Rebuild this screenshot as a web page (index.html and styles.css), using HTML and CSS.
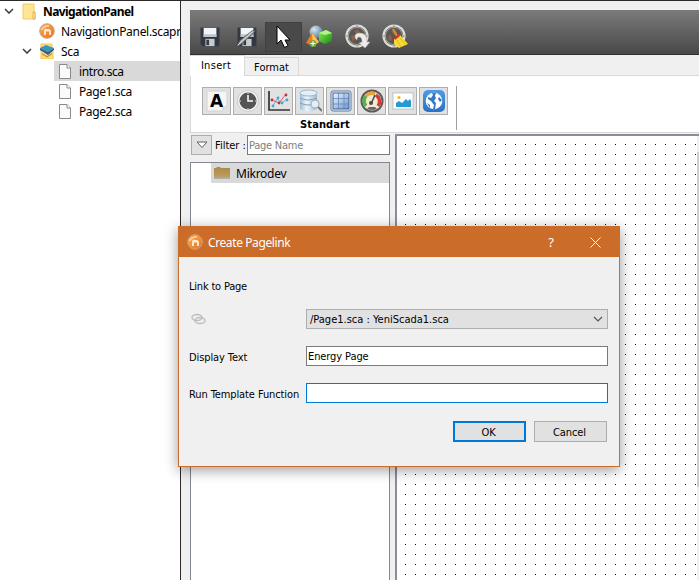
FILE: index.html
```
<!DOCTYPE html>
<html lang="en">
<head>
<meta charset="utf-8">
<title>NavigationPanel</title>
<link rel="stylesheet" href="styles.css">
</head>
<body>
<svg class="defs" width="0" height="0">
  <defs>
    <linearGradient id="orange" x1="0" y1="0" x2="1" y2="1"><stop offset="0" stop-color="#ffad4e"/><stop offset="1" stop-color="#ee7018"/></linearGradient>
    <linearGradient id="green" x1="0" y1="0" x2="1" y2="1"><stop offset="0" stop-color="#8af05a"/><stop offset="1" stop-color="#168a0c"/></linearGradient>
    <radialGradient id="ball" cx=".35" cy=".3" r=".8"><stop offset="0" stop-color="#d7e6f2"/><stop offset="1" stop-color="#4c7392"/></radialGradient>
    <linearGradient id="blue" x1="0" y1="0" x2="0" y2="1"><stop offset="0" stop-color="#4f9ae6"/><stop offset="1" stop-color="#2b70c4"/></linearGradient>
    <linearGradient id="grid" x1="0" y1="0" x2="1" y2="1"><stop offset="0" stop-color="#f1f6fc"/><stop offset="1" stop-color="#6d96cc"/></linearGradient>
    <linearGradient id="steel" x1="0" y1="0" x2="1" y2="0"><stop offset="0" stop-color="#9dbdd6"/><stop offset=".4" stop-color="#edf5fb"/><stop offset="1" stop-color="#9ab8cf"/></linearGradient>
    <linearGradient id="gold" x1="0" y1="0" x2="0" y2="1"><stop offset="0" stop-color="#a88a4c"/><stop offset=".75" stop-color="#bd9b58"/><stop offset="1" stop-color="#aab4bd"/></linearGradient>
    <symbol id="logo" viewBox="0 0 16 16"><circle cx="8" cy="8" r="7.3" fill="url(#orange)" stroke="#c2a58c"/><path d="M5 12V7l2-2v1h3l2 1.500V12h-2V8.500H7V12z" fill="#fff" opacity=".8"/><path d="M2.500 7Q4.500 2.800 10 2.800" fill="none" stroke="#ffd7a0" stroke-width="1.500"/></symbol>
    <symbol id="page" viewBox="0 0 14 17"><path d="M1.500 1.500h7.500l3.500 3.500v10.500h-11z" fill="#fafafa" stroke="#898989"/><path d="M9 1.500V5h3.500" fill="#fff" stroke="#898989"/></symbol>
    <symbol id="floppy" viewBox="0 0 22 22"><path d="M1 1h20v20H3l-2-2z" fill="#303742" stroke="#3a414b"/><path d="M4 1h14v10H4z" fill="#f2f5f8"/><path d="M4 8h14v3H4z" fill="#b9c5d1"/><path d="M6 13h10v8H6z" fill="#c8cbce"/><path d="M7 14h3v6H7z" fill="#343942"/></symbol>
    <symbol id="reel" viewBox="0 0 26 26"><circle cx="12" cy="12" r="10.500" fill="#5a5654" stroke="#deded9" stroke-width="2.200"/><circle cx="12" cy="12" r="8.600" fill="none" stroke="#a2a29c"/><path d="M9 7l4-2 2 4-3 2zM6 12l3-1 1 5-3 1z" fill="#8d5f48"/><path d="M12 .5v3M.5 12h3M12 20v3M20.500 12h3" stroke="#9b9b96"/></symbol>
  </defs>
</svg>
<div class="app">
  <aside class="explorer">
    <div class="node root"><svg class="chev" viewBox="0 0 10 6"><path d="M1 1l4 4 4-4"/></svg>
      <svg class="folder" viewBox="0 0 14 17"><path d="M1 1h11v8h1v7H1z" fill="#ffe594" stroke="#f0cc6b"/><path d="M11 9h2v7h-2z" fill="#fff0b8" stroke="#d9b34d"/></svg><span>NavigationPanel</span></div>
    <div class="node file1"><svg class="i16"><use href="#logo"/></svg><span>NavigationPanel.scapr</span></div>
    <div class="node sub"><svg class="chev" viewBox="0 0 10 6"><path d="M1 1l4 4 4-4"/></svg>
      <svg class="i16" viewBox="0 0 16 16"><path d="M2 1h11v7h1v8H2z" fill="#ffdf7a" stroke="#ecc75c"/><path d="M3 10l5 3 5-3v1.500L8 14.500l-5-3z" fill="#e28332"/><path d="M1 5l6-3 8 3-6 4z" fill="#3c93bd"/><path d="M1 5v2l8 5V9zM15 5v2l-6 5V9z" fill="#226488"/></svg><span>Sca</span></div>
    <div class="node leaf selected"><svg class="doc"><use href="#page"/></svg><span>intro.sca</span></div>
    <div class="node leaf"><svg class="doc"><use href="#page"/></svg><span>Page1.sca</span></div>
    <div class="node leaf"><svg class="doc"><use href="#page"/></svg><span>Page2.sca</span></div>
  </aside>
  <main class="editor">
    <div class="toolbar">
      <div class="tool"><svg class="i20"><use href="#floppy"/></svg></div>
      <div class="tool"><svg class="i20" viewBox="0 0 22 22"><use href="#floppy" width="22" height="22"/><path d="M0 21l3-6L17 4l3 0-2 3L4 19z" fill="#a6a8a9" stroke="#55595d"/><path d="M1 20L17 5" stroke="#e6e8e8"/></svg></div>
      <div class="tool active"><svg class="cursor" viewBox="0 0 15 24"><path d="M1 1v18l4-4 3.500 7.500 3.500-1.800-3-5.700h5z" fill="#fff" stroke="#000"/></svg></div>
      <div class="tool"><svg class="shapes" viewBox="0 0 26 24"><circle cx="10" cy="7" r="6.500" fill="url(#ball)"/><path d="M6 8L0 18l7 3 6-4z" fill="#ef7a20"/><path d="M6 8l1 13 6-4z" fill="#ffc54d"/><circle cx="7" cy="18.500" r="3.500" fill="#76a94a"/><path d="M7 16v5M4.500 18.500h5" stroke="#fff" fill="none"/><path d="M13 8l7-3 6 3v8l-7 3-6-3z" fill="url(#green)"/><path d="M13 8l6 2 7-2-6-3z" fill="#b1f587"/></svg></div>
      <div class="tool"><svg class="i26" viewBox="0 0 26 26"><use href="#reel" width="26" height="26"/><path d="M10 14q-1-5 5-5 7 0 7 9h3l-5 6-6-5 3-1q0-5-3-5-2 0-2 3z" fill="#ecebea" stroke="#aaa" stroke-width=".5"/></svg></div>
      <div class="tool"><svg class="i26" viewBox="0 0 26 26"><use href="#reel" width="26" height="26"/><path d="M11 5l4 7" stroke="#d28b35" stroke-width="2.400"/><path d="M12 15l6-4 8 9-9 4-5-4z" fill="#f6dc32"/><path d="M12 14l5-4 1 2-5 4z" fill="#d52d27"/><path d="M15 16l4 7M18 14l5 6" stroke="#cfaa1c" stroke-width=".7"/></svg></div>
    </div>
    <div class="tabs"><div class="tab on">Insert</div><div class="tab">Format</div></div>
    <section class="ribbon">
      <div class="group">
        <div class="buttons">
          <button><svg viewBox="0 0 24 24"><path d="M2 2h20v15l-5 5H2z" fill="#f6f6f6" stroke="#d2d2d2"/><path d="M17 22v-4l5-1z" fill="#ddd"/></svg><b>A</b></button>
          <button><svg viewBox="0 0 24 24"><circle cx="12" cy="12" r="10.500" fill="#f3f3f3" stroke="#ccc"/><circle cx="12" cy="12" r="8.500" fill="#555"/><path d="M12 6v6h5" fill="none" stroke="#fff" stroke-width="1.500"/><path d="M12 4v1M12 19v1M4 12h1M19 12h1" stroke="#ddd"/></svg></button>
          <button><svg viewBox="0 0 24 24"><path d="M2 2v19h21" fill="none" stroke="#333" stroke-width="1.700"/><path d="M6 17l4-7 5 4 5-4" fill="none" stroke="#54a9d0" stroke-width=".8"/><path d="M5 11l7 3 7-9" fill="none" stroke="#ca4449" stroke-width=".8"/><g fill="#c7303a"><circle cx="5" cy="11" r="1.400"/><circle cx="12" cy="14" r="1.400"/><circle cx="19" cy="6" r="1.400"/></g><g fill="#48a4cf"><circle cx="6" cy="17" r="1.400"/><circle cx="11" cy="9" r="1.400"/><circle cx="15" cy="14" r="1.400"/><circle cx="20" cy="11" r="1.400"/></g></svg></button>
          <button><svg viewBox="0 0 24 24"><path d="M2 4v16q8 5 17 0V4z" fill="url(#steel)"/><ellipse cx="10.500" cy="4" rx="8.500" ry="3" fill="#e4eff8" stroke="#9ab7cd"/><path d="M2 9q8 4 17 0M2 14q8 4 17 0" stroke="#7f9fb9" fill="none"/><circle cx="17" cy="15" r="4" fill="#e3eef5" stroke="#aab4ba" stroke-width="1.300"/><path d="M20 18l4 4" stroke="#777" stroke-width="2"/></svg></button>
          <button><svg viewBox="0 0 24 24"><rect x="2" y="2" width="20" height="20" rx="2" fill="#f3f7fc" stroke="#5a79a0"/><rect x="4" y="4" width="16" height="16" fill="url(#grid)"/><path d="M4 9.500h16M4 15h16M9.500 4v16M15 4v16" stroke="#6588ba" stroke-width=".8"/><rect x="4" y="4" width="16" height="16" fill="none" stroke="#3b5f98"/></svg></button>
          <button><svg viewBox="0 0 24 24"><circle cx="12" cy="12" r="10.500" fill="#f2e9d0" stroke="#5b5b5b" stroke-width="2"/><path d="M6 17A7.500 7.500 0 0 1 6 7" fill="none" stroke="#58b44a" stroke-width="3.500"/><path d="M6 7a7.500 7.500 0 0 1 9-2" fill="none" stroke="#eda437" stroke-width="3.500"/><path d="M16 6a7.500 7.500 0 0 1 2 11" fill="none" stroke="#d83a36" stroke-width="3.500"/><path d="M11 15l4-9" stroke="#444" stroke-width="1.500"/><circle cx="11" cy="14" r="2" fill="#494949"/><path d="M7 20q5 2 10 0l-2-2H9z" fill="#666"/></svg></button>
          <button><svg viewBox="0 0 24 24"><path d="M1 3h22v18H1z" fill="#cecece"/><path d="M2.500 4.500h19v15h-19z" fill="#fff"/><path d="M5 18v-4l3-2 3 2 4-4 2 2 2-2 1 2v6z" fill="#239bd0"/><circle cx="8" cy="8.500" r="1.600" fill="#f3b61d"/></svg></button>
          <button><svg viewBox="0 0 24 24"><rect x="1" y="1" width="22" height="22" rx="5" fill="url(#blue)"/><circle cx="12" cy="12" r="8.300" fill="#fff"/><path d="M10 4l4 0-1 3 1 2-2 3 2 2-1 6-2 0 1-4-3-4-3-2 0-2 3 1 2-3zM17 8l3 3-2 2-2-3zM5 14l3 2 0 3z" fill="#3178ca"/></svg></button>
        </div>
        <div class="caption">Standart</div>
      </div>
    </section>
    <div class="work">
      <div class="library">
        <div class="filter"><button class="drop"><svg viewBox="0 0 12 8"><path d="M1 1h10L6 6.500z" fill="#fff" stroke="#606060"/></svg></button><label>Filter :</label><div class="search">Page Name</div></div>
        <div class="list"><div class="item"><svg viewBox="0 0 16 14"><path d="M0 2h2l1-1h3l1 1h9v11H0z" fill="url(#gold)"/></svg><span>Mikrodev</span></div></div>
      </div>
      <div class="canvas"><div class="scroll"><div class="thumb"></div></div></div>
    </div>
  </main>
</div>
<div class="dialog">
  <header><svg class="i16"><use href="#logo"/></svg><span class="title">Create Pagelink</span><span class="help">?</span><svg class="close" viewBox="0 0 11 11"><path d="M.5.5l10 10M10.500.5l-10 10"/></svg></header>
  <div class="form">
    <div class="row heading"><label>Link to Page</label></div>
    <div class="row link"><label><svg class="chain" viewBox="0 0 15 12"><g fill="none" stroke="#bdbdbd" stroke-width="1.400"><ellipse cx="6" cy="4.500" rx="5" ry="3"/><ellipse cx="9" cy="7.500" rx="5" ry="3"/></g></svg></label><div class="field select"><span>/Page1.sca : YeniScada1.sca</span><svg viewBox="0 0 10 6"><path d="M1 1l4 4 4-4"/></svg></div></div>
    <div class="row text"><label>Display Text</label><div class="field">Energy Page</div></div>
    <div class="row text"><label class="long">Run Template Function</label><div class="field focus"></div></div>
    <div class="actions"><button class="ok">OK</button><button>Cancel</button></div>
  </div>
</div>
</body>
</html>
```
FILE: styles.css
```
* { box-sizing: border-box; }
body { margin: 0; width: 699px; height: 580px; overflow: hidden; background: #f0f0f0; color: #000; font: 11px "DejaVu Sans Condensed", "DejaVu Sans", sans-serif; }
svg { display: block; flex: none; }
button { font: inherit; color: inherit; padding: 0; margin: 0; }
.defs { position: absolute; }
.app { display: flex; height: 580px; border-top: 1px solid #2d2a2b; }
.explorer { width: 181px; flex: none; background: #fff; border-right: 1px solid #2d2a2b; overflow: hidden; }
.node { height: 20px; display: flex; align-items: center; white-space: nowrap; font: 12px "Noto Sans", sans-serif; }
.node.root { padding-left: 4px; font-weight: bold; }
.chev { width: 10px; height: 6px; fill: none; stroke: #404040; stroke-width: 1.6; }
.folder { width: 14px; height: 17px; margin: 0 7px 0 8px; }
.root span { letter-spacing: -.6px; }
.i16 { width: 16px; height: 16px; }
.file1 { padding-left: 39px; }
.file1 span { margin-left: 6px; letter-spacing: -.31px; }
.sub { padding-left: 22px; }
.sub .i16 { margin: 0 6px 0 7px; }
.sub span { letter-spacing: -.3px; }
.leaf { margin-left: 54px; padding-left: 4px; }
.leaf span { margin-left: 7px; letter-spacing: -.4px; }
.doc { width: 14px; height: 17px; }
.selected { background: #d9d9d9; }
.editor { flex: 1; min-width: 0; padding: 9px 0 0 9px; display: flex; flex-direction: column; }
.toolbar { height: 45px; flex: none; background: linear-gradient(#7b7b7b, #484848); border-bottom: 1px solid #303030; display: flex; align-items: flex-start; padding: 12px 0 0 1px; }
.tool { width: 37px; height: 30px; display: flex; align-items: center; justify-content: center; padding-bottom: 1px; }
.tool.active { background: #494949; border: 1px solid #404040; }
.i20 { width: 20px; height: 20px; }
.i26 { width: 26px; height: 26px; }
.cursor { width: 15px; height: 24px; }
.shapes { width: 26px; height: 24px; margin-right: 3px; }
.tabs { display: flex; height: 21px; flex: none; align-items: flex-end; box-shadow: inset 0 -1px #d9d9d9; }
.tab { height: 19px; width: 54px; border: 1px solid #d9d9d9; border-left: 0; text-align: center; line-height: 19px; }
.tab.on { width: 55px; height: 21px; background: #fff; border-bottom: 0; line-height: 20px; letter-spacing: .3px; padding-right: 2px; }
.ribbon { height: 57px; flex: none; background: #fff; border: 1px solid #d9d9d9; border-width: 0 0 1px 1px; padding: 10px 0 0 11px; }
.group { width: 255px; height: 44px; border-right: 1px solid #a0a0a0; }
.buttons { display: flex; gap: 2px; padding-top: 1px; }
.buttons button { width: 29px; height: 28px; border: 1px solid #adadad; background: #e1e1e1; display: grid; place-items: center; }
.buttons svg { width: 24px; height: 24px; grid-area: 1 / 1; }
.buttons b { grid-area: 1 / 1; font: bold 17px/20px "DejaVu Sans", sans-serif; }
.caption { text-align: center; width: 246px; padding-top: 1px; font: bold 11px/17px "DejaVu Sans Condensed", sans-serif; letter-spacing: .1px; }
.work { flex: 1; display: flex; min-height: 0; }
.library { width: 200px; margin-right: 5px; display: flex; flex-direction: column; padding-top: 2px; }
.filter { height: 20px; display: flex; align-items: center; padding-left: 1px; }
.drop { width: 21px; height: 20px; border: 1px solid #adadad; background: #e1e1e1; display: grid; place-items: center; }
.drop svg { width: 12px; height: 8px; }
.filter label { width: 35px; padding: 1px 0 0 3px; white-space: nowrap; }
.search { width: 143px; height: 20px; border: 1px solid #7a7a7a; background: #fff; color: #808080; padding-left: 1px; line-height: 20px; letter-spacing: -.25px; }
.list { margin-top: 7px; flex: 1; border: 1px solid #828790; border-bottom: 0; background: #fff; }
.item { height: 20px; margin-left: 20px; background: #d9d9d9; display: flex; align-items: center; padding-left: 3px; font: 12px "Noto Sans", sans-serif; letter-spacing: -.25px; }
.item svg { width: 16px; height: 14px; margin-right: 6px; }
/* Snap grid: one pixel every ten */
.canvas { flex: 1; margin-top: 1px; border: 2px solid #8b8e98; border-width: 2px 0 0 2px; background: conic-gradient(from 90deg at 9px 9px, #000 90deg, transparent 0) -1px -1px / 10px 10px, #fff; display: flex; justify-content: flex-end; }
.scroll { width: 2px; background: #f0f0f0; padding-top: 16px; }
.thumb { height: 335px; background: #cdcdcd; }
.dialog { position: absolute; left: 178px; top: 226px; width: 442px; height: 241px; border: 1px solid #cd6d2b; background: #f0f0f0; box-shadow: 0 3px 13px rgba(0,0,0,.4); }
.dialog header { height: 30px; background: #cb6c29; color: #fff; display: flex; align-items: center; padding-left: 8px; }
.title { margin-left: 5px; font: 12px "Noto Sans", sans-serif; flex: 1; letter-spacing: -.4px; }
.help { font: 13px "Noto Sans", sans-serif; margin-right: 36px; }
.close { width: 11px; height: 11px; stroke: #fff; margin-right: 18px; }
.form { padding: 19px 11px 0 10px; display: flex; flex-direction: column; }
.row { height: 20px; display: flex; align-items: center; letter-spacing: -.1px; }
.row label { width: 117px; flex: none; white-space: nowrap; }
.row.heading { letter-spacing: -.2px; }
.row.link { margin-top: 13px; }
.row.text { margin-top: 17px; }
.row.text label { padding-top: 2px; }
.chain { width: 15px; height: 12px; margin-left: 2px; }
.field { flex: 1; height: 20px; border: 1px solid #7a7a7a; background: #fff; padding-left: 1px; line-height: 20px; }
.field.focus { border-color: #0078d7; }
.select { background: #e1e1e1; border-color: #adadad; display: flex; align-items: center; justify-content: space-between; padding: 0 4px 0 3px; letter-spacing: 0; }
.select span { padding-top: 1px; }
.select svg { width: 10px; height: 6px; fill: none; stroke: #555; stroke-width: 1.2; }
.actions { margin-top: 18px; display: flex; justify-content: flex-end; gap: 8px; padding-right: 1px; }
.actions button { width: 73px; height: 21px; border: 1px solid #adadad; background: #e1e1e1; padding: 1px 2px 0 0; letter-spacing: -.1px; }
.actions .ok { border: 2px solid #0078d7; }
```
